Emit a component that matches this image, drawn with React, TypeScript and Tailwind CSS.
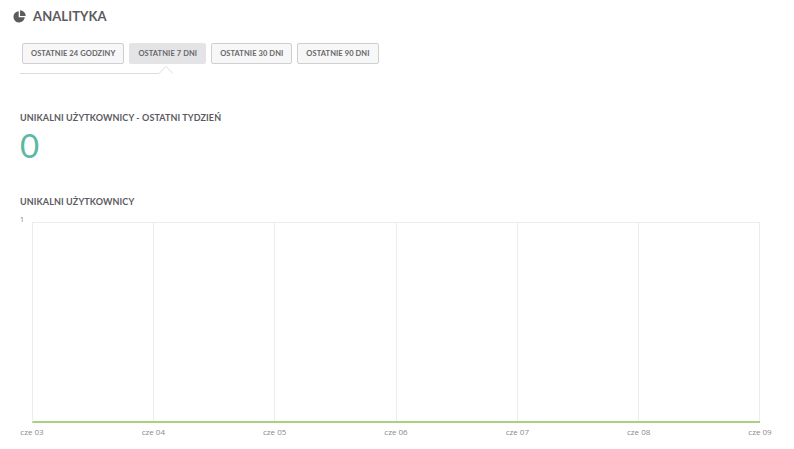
import React from 'react'

const TABS = ['Ostatnie 24 godziny', 'Ostatnie 7 dni', 'Ostatnie 30 dni', 'Ostatnie 90 dni']
const DAYS = ['cze 03', 'cze 04', 'cze 05', 'cze 06', 'cze 07', 'cze 08', 'cze 09']

function PieIcon() {
  return (
    <svg className="w-[13px] h-[13px]" viewBox="0 0 24 24" fill="#5b5b5f">
      {/* main piece */}
      <path d="M10.5 2.2 A10.5 10.5 0 1 0 21.8 13.5 L10.5 13.5 Z" />
      {/* offset slice */}
      <path d="M13 0.5 A10.5 10.5 0 0 1 23.5 11 L13 11 Z" />
    </svg>
  )
}

export default function App() {
  const active = 1
  return (
    <div className="w-[794px] h-[449px] bg-white overflow-hidden" style={{ fontFamily: 'Lato, "Noto Sans", sans-serif' }}>
      {/* Header */}
      <div className="flex items-center gap-[7px] pl-[13px] pt-[6px] h-[26px]">
        <PieIcon />
        <h1 className="text-[13px] font-bold tracking-[0.1px] text-[#5b5b5f] uppercase leading-none">Analityka</h1>
      </div>

      {/* Range tabs */}
      <div className="pl-[22px] pt-[17px]">
        <div className="flex gap-[5px]">
          {TABS.map((t, i) => (
            <button
              key={t}
              className={`h-[21px] px-[8px] rounded-[2px] border text-[7.5px] font-bold uppercase tracking-[0.1px] text-[#66666a] leading-none ${
                i === active ? 'bg-[#e4e4e7] border-[#e4e4e7]' : 'bg-[#f7f7f7] border-[#cfcfd2]'
              }`}
            >
              {t}
            </button>
          ))}
        </div>
        {/* underline with caret under active tab */}
        <svg className="block mt-[1px] -ml-[2px]" width="160" height="9" viewBox="0 0 160 9">
          <path d="M0 8.5 H139 L146 1.5 L153 8.5" fill="none" stroke="#dcdcdf" strokeWidth="1" />
        </svg>
      </div>

      {/* Weekly unique users */}
      <div className="pl-[20px] pt-[39px]">
        <h2 className="text-[9px] font-bold uppercase text-[#5b5b5f] leading-none tracking-[0.1px]">
          Unikalni użytkownicy - ostatni tydzień
        </h2>
        <div className="text-[33px] leading-none text-[#5ab9a2] mt-[7px] font-normal">0</div>
      </div>

      {/* Chart */}
      <div className="pl-[20px] pt-[35px]">
        <h2 className="text-[9px] font-bold uppercase text-[#5b5b5f] leading-none tracking-[0.1px]">
          Unikalni użytkownicy
        </h2>
      </div>
      <div className="relative pl-[32px] pr-[34px] pt-[16px]" style={{ fontFamily: '"Open Sans", "Liberation Sans", sans-serif' }}>
        <span className="absolute left-[20px] top-[10px] text-[7px] text-[#777] leading-none">1</span>
        <div className="flex h-[201px] border-t border-l border-[#ececec] border-b-2 border-b-[#a9cf7f]">
          {DAYS.slice(1).map((d) => (
            <div key={d} className="flex-1 border-r border-[#ececec]" />
          ))}
        </div>
        <div className="flex justify-between -mx-[20px] mt-[5px]">
          {DAYS.map((d) => (
            <span key={d} className="w-[40px] text-center text-[8px] text-[#8a8a8a] leading-none">
              {d}
            </span>
          ))}
        </div>
      </div>
    </div>
  )
}
